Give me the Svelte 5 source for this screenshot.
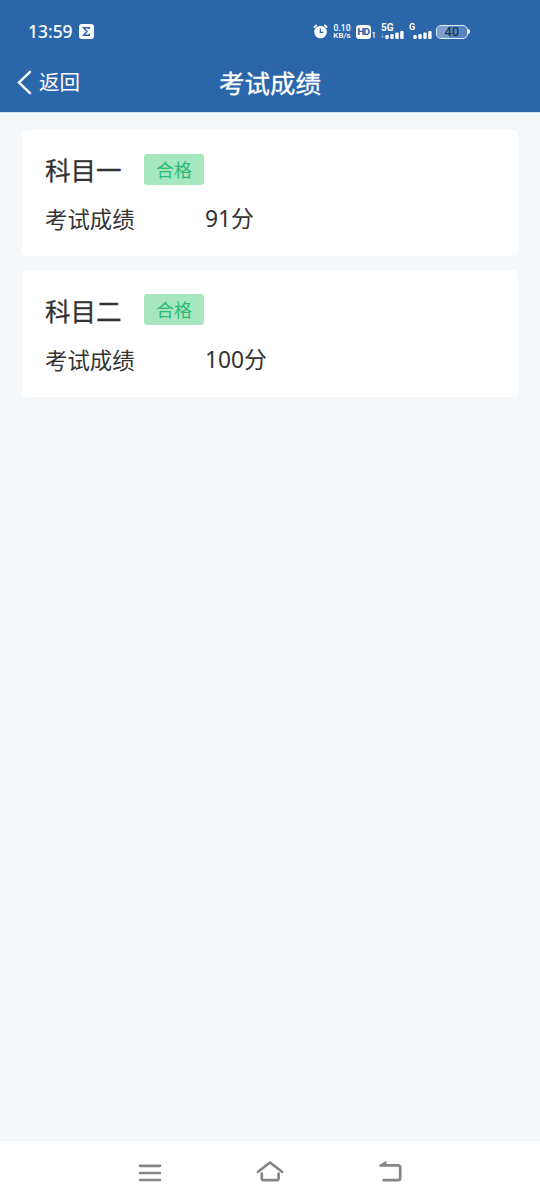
<script lang="ts">
	const results = [
		{ subject: '科目一', status: '合格', score: 91 },
		{ subject: '科目二', status: '合格', score: 100 }
	];
	const networks = ['5G', 'G'];
	const battery = 40;
</script>

<div class="screen">
	<header>
		<div class="status-bar">
			<span class="time">13:59</span>
			<svg class="sigma" width="15" height="15" viewBox="0 0 15 15">
				<rect width="15" height="15" rx="3" fill="#fff" />
				<path d="M10.3 5.3V3.7H4.6L8 7.4 4.6 11.3h5.7V9.7" fill="none" stroke="#2b65aa" stroke-width="1.5" />
			</svg>
			<div class="indicators">
				<svg class="alarm" width="15" height="15" viewBox="0 0 15 15">
					<circle cx="7.5" cy="8" r="6.3" fill="#fff" />
					<path d="M1.4 3 3.2 1.4M13.6 3l-1.8-1.6" stroke="#fff" stroke-width="1.8" stroke-linecap="round" />
					<path d="M7.4 4.7v3.7h2.8" fill="none" stroke="#2b65aa" stroke-width="1.3" />
				</svg>
				<div class="speed">
					<span class="rate">0.10</span>
					<span>KB/s</span>
				</div>
				<span class="hd">HD</span>
				<span class="sim">1</span>
				{#each networks as network, i}
					<div class="network" class:second={i === 1}>
						<span>{network}</span>
						<svg width="24" height="16" viewBox="0 0 24 16">
							{#if i === 0}
								<path d="M2.5 9v5m-1.5-2 1.5 2 1.5-2" fill="none" stroke="#6c96cb" />
							{/if}
							<g fill="#fff">
								<rect x="5.3" y="11" width="3.4" height="4" rx="1" />
								<rect x="10.3" y="10" width="3.4" height="5" rx="1" />
								<rect x="15.3" y="8.5" width="3.4" height="6.5" rx="1" />
								<rect x="20.2" y="7" width="3.4" height="8" rx="1" />
							</g>
						</svg>
					</div>
				{/each}
				<div class="battery">
					<div class="level" style="width: {battery}%"></div>
					<span>{battery}</span>
				</div>
				<i class="battery-tip"></i>
			</div>
		</div>
		<nav class="title-bar">
			<div class="back">
				<svg width="15" height="25" viewBox="0 0 15 25">
					<path d="M13 1.8 2 12.5 13 23.2" fill="none" stroke="#fff" stroke-width="2.4" stroke-linecap="round" />
				</svg>
				<span>返回</span>
			</div>
			<h1>考试成绩</h1>
		</nav>
	</header>

	<main>
		{#each results as result}
			<section class="card">
				<div class="card-head">
					<h2>{result.subject}</h2>
					<span class="badge">{result.status}</span>
				</div>
				<div class="row">
					<span class="label">考试成绩</span>
					<span class="score">{result.score}分</span>
				</div>
			</section>
		{/each}
	</main>

	<footer>
		<svg width="30" height="30" viewBox="0 0 30 30">
			<path d="M5 7.8h20M5 15h20M5 22h20" />
		</svg>
		<svg width="30" height="30" viewBox="0 0 30 30">
			<path d="m3 13.8 12-9.3 12 9.3" />
			<path d="M6.8 15.5v4.7q0 2 2 2h12.8q2 0 2-2v-4.7" />
		</svg>
		<svg width="30" height="30" viewBox="0 0 30 30">
			<path d="M6 7.3h17q2.2 0 2.2 2.2V20q0 2.2-2.2 2.2H8.6" />
			<path class="arrow" d="M4.3 7.5 11 3.5v4z" />
		</svg>
	</footer>
</div>

<style>
	:global(body) {
		background: #f4f8fa;
	}

	.screen {
		display: flex;
		flex-direction: column;
		height: 1204px;
		font-family: 'Noto Sans CJK SC', sans-serif;
		color: #333;
		background: #f4f8fa;
	}

	header {
		height: 112px;
		color: #fff;
		background: #2b65aa;
		border-bottom: 1px solid #d3e2ef;
		box-sizing: content-box;
	}

	.status-bar {
		display: flex;
		align-items: center;
		height: 63px;
		box-sizing: border-box;
		padding: 0 70px 0 28px;
	}

	.time {
		width: 51px;
		margin-top: -2px;
		font-family: 'Noto Sans', sans-serif;
		font-size: 17.4px;
		font-weight: 500;
	}

	.indicators {
		display: flex;
		align-items: center;
		margin-left: auto;
		font-family: Inter, sans-serif;
	}

	.speed {
		display: flex;
		flex-direction: column;
		width: 18px;
		margin: 1px 0 0 5px;
		font-family: Roboto, sans-serif;
		font-size: 8px;
		font-weight: 500;
		line-height: 8px;
		text-align: center;
	}

	.rate {
		font-size: 8.6px;
	}

	.hd {
		width: 15px;
		height: 14px;
		margin-left: 5px;
		border-radius: 3.5px;
		font-size: 9px;
		font-weight: 800;
		line-height: 14px;
		letter-spacing: -0.5px;
		text-align: center;
		color: #2b65aa;
		background: #fff;
	}

	.sim {
		width: 4px;
		margin: 8px 0 0 1px;
		font-size: 7px;
		font-weight: 600;
		line-height: 8px;
	}

	.network {
		position: relative;
		width: 24px;
		height: 16px;
		margin-left: 4px;
	}

	.network span {
		position: absolute;
		top: -1px;
		left: 1px;
		font-family: Roboto, sans-serif;
		font-size: 10px;
		font-weight: 700;
		line-height: 9px;
	}

	.network.second span {
		font-size: 9px;
	}

	.network svg {
		display: block;
	}

	.battery {
		position: relative;
		width: 32px;
		height: 14px;
		margin-left: 4px;
		box-sizing: border-box;
		border: 1.5px solid #e6eef8;
		border-radius: 5px;
		overflow: hidden;
		background: #5584bf;
	}

	.level {
		height: 100%;
		background: #7c9fcd;
	}

	.battery span {
		position: absolute;
		inset: 0;
		font-family: Roboto, sans-serif;
		font-size: 12.5px;
		font-weight: 500;
		line-height: 12px;
		letter-spacing: 0.3px;
		text-align: center;
		color: #193557;
	}

	.battery-tip {
		width: 2px;
		height: 5px;
		border-radius: 0 2px 2px 0;
		background: #fff;
	}

	.title-bar {
		display: grid;
		grid-template-columns: 1fr auto 1fr;
		align-items: center;
		height: 38px;
	}

	.back {
		display: flex;
		align-items: center;
		gap: 7.5px;
		padding-left: 16.5px;
		font-size: 20.5px;
		line-height: 30px;
	}

	.back span {
		margin-top: -2px;
	}

	h1,
	h2 {
		margin: 0;
		font-size: 25.5px;
		font-weight: 400;
		line-height: 36px;
		-webkit-text-stroke: 0.3px currentColor;
	}

	h1 {
		margin-top: -1px;
	}

	main {
		flex: 1;
		display: flex;
		flex-direction: column;
		gap: 14px;
		padding: 16.5px 22px;
	}

	.card {
		height: 126.5px;
		padding: 24px 23px 0;
		box-sizing: border-box;
		border-radius: 5px;
		background: #fff;
	}

	.card-head {
		display: flex;
		align-items: center;
		height: 31px;
	}

	.badge {
		width: 60px;
		height: 31px;
		margin-left: 22.5px;
		border-radius: 3px;
		font-size: 18px;
		line-height: 31px;
		text-align: center;
		color: #2bb978;
		background: #a7e7c0;
	}

	.row {
		display: flex;
		margin-top: 17.5px;
		font-size: 22.4px;
		line-height: 33px;
	}

	.label {
		width: 160px;
	}

	.score {
		font-family: 'Noto Sans', 'Noto Sans CJK SC', sans-serif;
		font-size: 22.8px;
		line-height: 34px;
	}

	footer {
		display: flex;
		justify-content: center;
		gap: 90px;
		height: 63.5px;
		box-sizing: border-box;
		padding-top: 17.5px;
		background: #fff;
	}

	footer path {
		fill: none;
		stroke: #858585;
		stroke-width: 2.7;
		stroke-linecap: round;
		stroke-linejoin: round;
	}

	footer .arrow {
		fill: #858585;
		stroke-width: 1;
	}
</style>
